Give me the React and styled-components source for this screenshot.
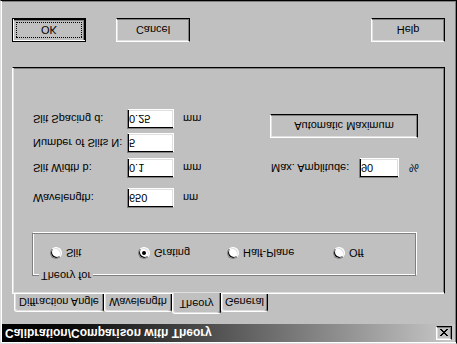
import styled, { createGlobalStyle } from 'styled-components';

const GlobalStyle = createGlobalStyle`
  * { box-sizing: border-box; }
  body {
    margin: 0;
    background: #c0c0c0;
    font-family: "Liberation Sans", Arial, sans-serif;
  }
`;

// the whole dialog is shown upside down in the reference
const Window = styled.div`
  width: 457px;
  height: 344px;
  padding: 1px;
  background: #c0c0c0;
  border: 1px solid;
  border-color: #dfdfdf #000 #000 #dfdfdf;
  box-shadow: inset 1px 1px #fff, inset -1px -1px #808080;
  display: flex;
  flex-direction: column;
  font-size: 11px;
  color: #000;
  transform: scaleY(-1);
`;

const TitleBar = styled.div`
  height: 18px;
  flex-shrink: 0;
  display: flex;
  align-items: center;
  justify-content: space-between;
  padding: 0 3px 0 3px;
  background: linear-gradient(90deg, #000 0%, #0a0a0a 15%, #c8c8c8 100%);
  color: #fff;
  font-weight: bold;
  font-size: 12px;
`;

const CloseButton = styled.div`
  width: 16px;
  height: 14px;
  display: flex;
  align-items: center;
  justify-content: center;
  background: #c0c0c0;
  border: 1px solid;
  border-color: #fff #000 #000 #fff;
  box-shadow: inset -1px -1px #808080, inset 1px 1px #dfdfdf;
`;

const Body = styled.div`
  flex: 1;
  display: flex;
  flex-direction: column;
  padding: 10px 10px 0;
`;

const TabRow = styled.div`
  height: 20px;
  display: flex;
  align-items: flex-end;
  padding-left: 2px;
  position: relative;
  z-index: 1;
`;

const Tab = styled.div`
  width: ${(p) => p.$w}px;
  height: ${(p) => (p.$active ? 21 : 18)}px;
  margin-bottom: ${(p) => (p.$active ? -1 : 0)}px;
  background: #c0c0c0;
  border: 1px solid;
  border-bottom: none;
  border-color: #fff #000 transparent #fff;
  border-radius: 3px 3px 0 0;
  box-shadow: inset -1px 0 #808080, inset 1px 1px #dfdfdf;
  display: flex;
  align-items: center;
  justify-content: center;
  padding-bottom: ${(p) => (p.$active ? 2 : 0)}px;
`;

const Panel = styled.div`
  height: 227px;
  flex-shrink: 0;
  border: 1px solid;
  border-color: #fff #000 #000 #fff;
  box-shadow: inset 1px 1px #dfdfdf, inset -1px -1px #808080;
  padding: 17px 0 0 19px;
`;

const GroupBox = styled.div`
  width: 384px;
  height: 43px;
  border: 1px solid #808080;
  box-shadow: 1px 1px #fff, inset 1px 1px #fff;
  display: flex;
  flex-direction: column;
`;

const GroupLabel = styled.div`
  align-self: flex-start;
  margin: -7px 0 0 6px;
  padding: 0 2px;
  line-height: 13px;
  background: #c0c0c0;
`;

const RadioRow = styled.div`
  height: 32px;
  display: flex;
  align-items: center;
  padding-left: 17px;
`;

const RadioOption = styled.div`
  width: ${(p) => (p.$w ? `${p.$w}px` : 'auto')};
  display: flex;
  align-items: center;
  gap: 4px;
`;

const RadioDot = styled.span`
  width: 12px;
  height: 12px;
  border-radius: 50%;
  background: #fff;
  border: 1px solid;
  border-color: #808080 #fff #fff #808080;
  box-shadow: inset 1px 1px #000, inset -1px -1px #dfdfdf;
  display: flex;
  align-items: center;
  justify-content: center;

  &::after {
    content: '';
    width: 4px;
    height: 4px;
    border-radius: 50%;
    background: ${(p) => (p.$checked ? '#000' : 'transparent')};
  }
`;

const Fields = styled.div`
  display: flex;
  margin-top: 25px;
`;

const LeftCol = styled.div`
  width: 238px;
  padding-left: 1px;
  display: flex;
  flex-direction: column;
`;

const RightCol = styled.div`
  display: flex;
  flex-direction: column;
  padding-top: 30px;
`;

const FieldRow = styled.div`
  height: 20px;
  margin-top: ${(p) => p.$mt || 0}px;
  display: flex;
  align-items: center;
`;

const FieldLabel = styled.span`
  width: ${(p) => p.$w}px;
  padding-left: ${(p) => p.$pl || 0}px;
`;

const TextBox = styled.input`
  width: ${(p) => p.$w}px;
  height: 20px;
  padding: 0 1px;
  margin: 0;
  background: #fff;
  border: 1px solid;
  border-color: #808080 #fff #fff #808080;
  box-shadow: inset 1px 1px #000, inset -1px -1px #dfdfdf;
  font-family: "Liberation Sans", Arial, sans-serif;
  font-size: 11px;
  color: #000;
  outline: none;
`;

const Unit = styled.span`
  margin-left: ${(p) => p.$ml}px;
`;

const Button = styled.div`
  width: ${(p) => p.$w}px;
  height: 24px;
  display: flex;
  align-items: center;
  justify-content: center;
  background: #c0c0c0;
  border: 1px solid;
  border-color: ${(p) => (p.$default ? '#000' : '#fff #000 #000 #fff')};
  box-shadow: ${(p) =>
    p.$default
      ? 'inset 1px 1px #fff, inset -1px -1px #000, inset -2px -2px #808080'
      : 'inset -1px -1px #808080, inset 1px 1px #dfdfdf'};
  margin-top: ${(p) => p.$mt || 0}px;
`;

const FocusRing = styled.span`
  width: 66px;
  height: 16px;
  border: 1px dotted #000;
  display: flex;
  align-items: center;
  justify-content: center;
`;

const ButtonRow = styled.div`
  display: flex;
  gap: 30px;
  margin-top: 25px;
`;

const Spacer = styled.div`
  flex: 1;
`;

const tabs = [
  { label: 'Diffraction Angle', w: 90 },
  { label: 'Wavelength', w: 68 },
  { label: 'Theory', w: 49, active: true },
  { label: 'General', w: 47 },
];

const radios = [
  { label: 'Slit', w: 88 },
  { label: 'Grating', w: 89, checked: true },
  { label: 'Half-Plane', w: 106 },
  { label: 'Off' },
];

const fields = [
  { label: 'Wavelength:', value: '650', unit: 'nm', mt: 0 },
  { label: 'Slit Width b:', value: '0.1', unit: 'mm', mt: 10 },
  { label: 'Number of Slits N:', value: '5', mt: 5 },
  { label: 'Slit Spacing d:', value: '0.25', unit: 'mm', mt: 4 },
];

export default function App() {
  return (
    <Window>
      <GlobalStyle />
      <TitleBar>
        <span>Calibration/Comparison with Theory</span>
        <CloseButton>
          <svg width="8" height="7" viewBox="0 0 8 7" shapeRendering="crispEdges">
            <path d="M0 0h2v1h1v1h2v-1h1v-1h2v1h-1v1h-1v1h-1v1h1v1h1v1h1v1h-2v-1h-1v-1h-2v1h-1v1h-2v-1h1v-1h1v-1h1v-1h-1v-1h-1v-1h-1z" fill="#000" />
          </svg>
        </CloseButton>
      </TitleBar>
      <Body>
        <TabRow>
          {tabs.map((t) => (
            <Tab key={t.label} $w={t.w} $active={t.active}>
              {t.label}
            </Tab>
          ))}
        </TabRow>
        <Panel>
          <GroupBox>
            <GroupLabel>Theory for</GroupLabel>
            <RadioRow>
              {radios.map((r) => (
                <RadioOption key={r.label} $w={r.w}>
                  <RadioDot $checked={r.checked} />
                  {r.label}
                </RadioOption>
              ))}
            </RadioRow>
          </GroupBox>
          <Fields>
            <LeftCol>
              {fields.map((f) => (
                <FieldRow key={f.label} $mt={f.mt}>
                  <FieldLabel $w={94}>{f.label}</FieldLabel>
                  <TextBox $w={47} defaultValue={f.value} readOnly />
                  {f.unit && <Unit $ml={9}>{f.unit}</Unit>}
                </FieldRow>
              ))}
            </LeftCol>
            <RightCol>
              <FieldRow>
                <FieldLabel $w={89} $pl={1}>Max. Amplitude:</FieldLabel>
                <TextBox $w={40} defaultValue="90" readOnly />
                <Unit $ml={10}>%</Unit>
              </FieldRow>
              <Button $w={148} $mt={20}>Automatic Maximum</Button>
            </RightCol>
          </Fields>
        </Panel>
        <ButtonRow>
          <Button $w={74} $default>
            <FocusRing>OK</FocusRing>
          </Button>
          <Button $w={74}>Cancel</Button>
          <Spacer />
          <Button $w={74}>Help</Button>
        </ButtonRow>
      </Body>
    </Window>
  );
}
